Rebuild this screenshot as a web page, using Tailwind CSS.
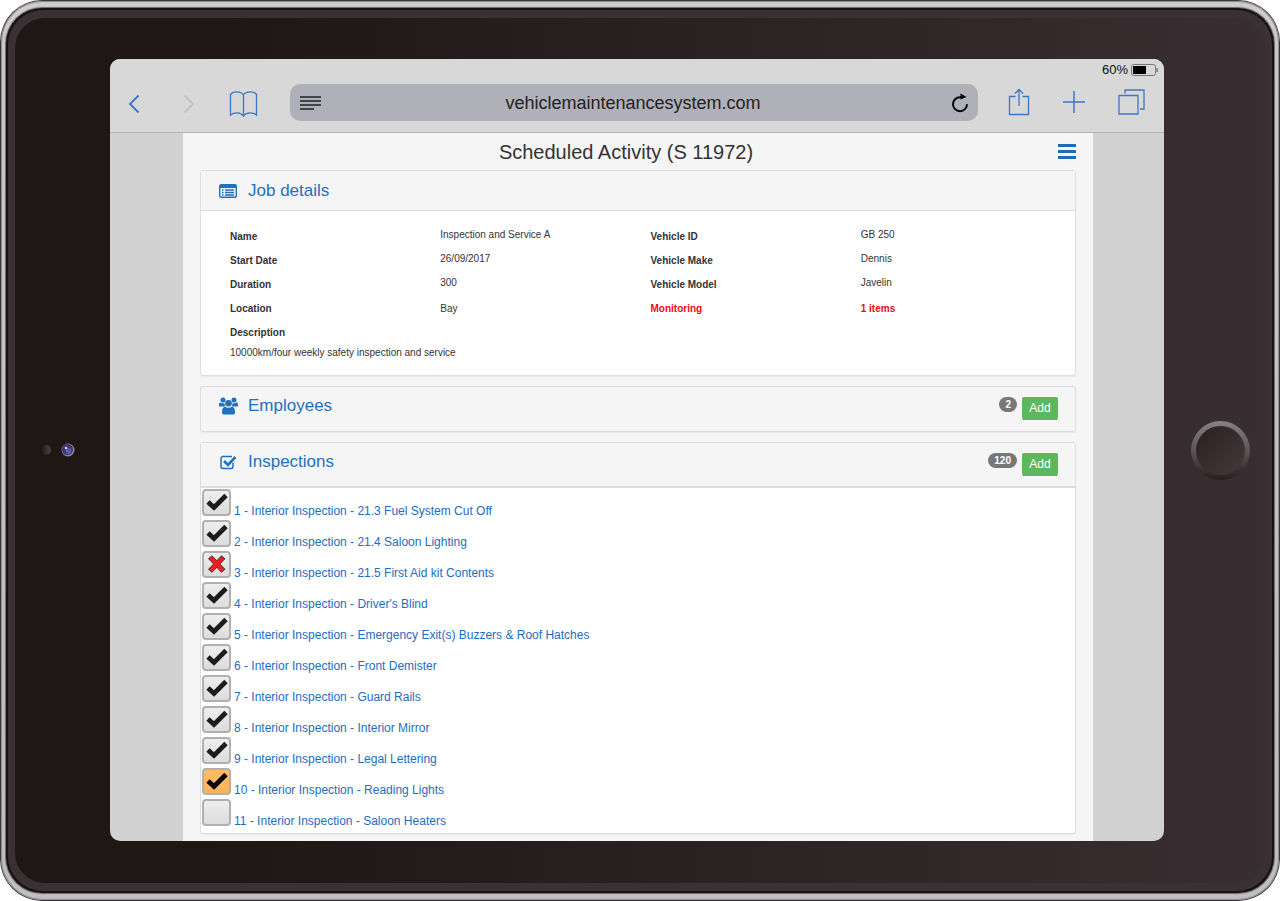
<!DOCTYPE html>
<html lang="en">
<head>
<meta charset="utf-8">
<meta name="viewport" content="width=device-width, initial-scale=1">
<title>Scheduled Activity (S 11972)</title>
<script src="https://cdn.jsdelivr.net/npm/@tailwindcss/browser@4"></script>
</head>
<body class="bg-white font-['Liberation_Sans',Arial,sans-serif] text-[#333]">

<svg class="hidden" aria-hidden="true">
  <symbol id="tick" viewBox="0 0 28 27"><path d="M5.500 13 L11.500 18.500 L23.500 6.500" fill="none" stroke="currentColor" stroke-width="4.800"/></symbol>
  <symbol id="cross" viewBox="0 0 28 27"><path d="M7.500 6 L21 20 M21 6 L7.500 20" fill="none" stroke="#333" stroke-width="5.400"/><path d="M8 6.500 L20.500 19.500 M20.500 6.500 L8 19.500" fill="none" stroke="#ee1c25" stroke-width="4"/></symbol>
</svg>

<!-- Tablet casing -->
<div class="min-h-screen flex rounded-[42px] bg-[#3a3639] p-px">
<div class="flex-1 flex rounded-[41px] bg-linear-to-b from-[#cfcdcf] to-[#c2bfc2] px-[5px] py-[7px] shadow-[inset_0_0_1px_1px_#8a888a]">
<div class="flex-1 flex rounded-[36px] bg-[#171213] p-[2px] shadow-[0_0_1px_1px_#6b676a]">
<div class="flex-1 flex rounded-[35px] bg-[#3a3135] px-[7px] py-[8px]">
<div class="flex-1 flex items-center rounded-[30px] bg-linear-to-r from-[#1e1716] from-15% to-[#392e31] pt-[41px] pb-[42px]">

  <div class="w-[95px] shrink-0 flex items-center gap-[10px] pl-[26px]" aria-hidden="true">
    <span class="size-[10px] rounded-full bg-linear-to-r from-[#1e1716] to-[#4b4547]"></span>
    <svg class="size-[14px]" viewBox="0 0 14 14"><circle cx="7" cy="7" r="6.500" fill="#8b8791"/><circle cx="6.500" cy="6.500" r="5.500" fill="#3d3670"/><circle cx="7.500" cy="8" r="3" fill="#6458a8"/><circle cx="5" cy="5" r="1.200" fill="#d5d2ee"/></svg>
  </div>

  <!-- Screen -->
  <div class="flex-1 min-w-0 self-stretch flex flex-col rounded-[10px] overflow-hidden bg-[#d2d2d2]">
    <header class="bg-[#d8d8d8] border-b border-[#b5b5b5] pb-[12px]">
      <div class="h-[25px] flex items-center justify-end gap-[3px] pr-[5px] pb-[3px] text-[13px] text-[#111]">
        <span>60%</span>
        <svg class="w-[28px] h-[12px]" viewBox="0 0 28 12" role="img" aria-label="Battery 60%"><rect x=".5" y=".5" width="24" height="11" rx="2" fill="none" stroke="#777"/><rect x="2" y="2" width="13" height="8" fill="#000"/><path d="M26 4 q1.500 2 0 4z" fill="#777" stroke="#777"/></svg>
      </div>
      <nav class="h-[36px] flex items-center pl-[18px] pr-[19px] text-[#3b76c8]">
        <button type="button" aria-label="Back" class="pt-[3px]"><svg class="w-[12px] h-[20px]" viewBox="0 0 12 20" fill="none" stroke="currentColor" stroke-width="1.800"><path d="M10.500 1.500 L2 10 L10.500 18.500"/></svg></button>
        <button type="button" aria-label="Forward" class="ml-[43px] pt-[3px] text-[#bcbcbf]"><svg class="w-[12px] h-[20px]" viewBox="0 0 12 20" fill="none" stroke="currentColor" stroke-width="1.500"><path d="M1.500 1.500 L10 10 L1.500 18.500"/></svg></button>
        <button type="button" aria-label="Bookmarks" class="ml-[34px] pt-[3px]"><svg class="w-[29px] h-[26px]" viewBox="0 0 29 26" fill="none" stroke="currentColor" stroke-width="1.300"><path d="M14.500 4 C12 0 4 0 1.500 3.500 V24 C5 21 11.500 21 14.500 25 C17.500 21 24 21 27.500 24 V3.500 C25 0 17 0 14.500 4 V25"/></svg></button>
        <div class="ml-[32px] flex-1 h-[37px] flex items-center rounded-[10px] bg-[#b0b0b9] px-[10px] pt-[2px] text-[#222]">
          <button type="button" aria-label="Reader view"><svg class="w-[22px] h-[16px]" viewBox="0 0 22 16" stroke="#222" stroke-width="1.500"><path d="M0 2h21M0 6h21M0 10h21M0 14h14"/></svg></button>
          <input type="text" aria-label="Address" value="vehiclemaintenancesystem.com" class="flex-1 min-w-0 mr-[8px] bg-transparent text-center text-[18px] leading-6 outline-none">
          <button type="button" aria-label="Reload"><svg class="w-[16px] h-[20px]" viewBox="0 0 16 20" fill="none" stroke="#000" stroke-width="2"><path d="M9 4.200 H8 A7 7 0 1 0 15 11.200"/><path d="M8.500 .5 L14.500 4 L8.500 6.500z" fill="#000" stroke="none"/></svg></button>
        </div>
        <button type="button" aria-label="Share" class="ml-[30px]"><svg class="w-[22px] h-[28px]" viewBox="0 0 22 28" fill="none" stroke="currentColor" stroke-width="1.300"><path d="M7.500 8.500H1.500v18h19v-18h-6M11 18V1.500M7 5.500l4-4 4 4"/></svg></button>
        <button type="button" aria-label="New tab" class="ml-[33px]"><svg class="size-[22px]" viewBox="0 0 22 22" stroke="currentColor" stroke-width="1.500"><path d="M11 0v22M0 11h22"/></svg></button>
        <button type="button" aria-label="Show tabs" class="ml-[33px]"><svg class="w-[27px] h-[26px]" viewBox="0 0 27 26" fill="none" stroke="currentColor" stroke-width="1.300"><path d="M1 6.500h19v18.500H1zM7 4.500V1h19v19h-4"/></svg></button>
      </nav>
    </header>

    <main class="flex-1 ml-[73px] mr-[71px] bg-[#f5f5f5] px-[17px] pb-[7px]">
      <div class="h-[37px] flex items-center">
        <h1 class="flex-1 pt-px text-center text-[20px] leading-6">Scheduled Activity (S 11972)</h1>
        <button type="button" aria-label="Menu" class="w-[24px] flex flex-col items-end gap-[3px]">
          <span class="w-[18px] h-[3px] bg-[#1d6cb9]"></span><span class="w-[18px] h-[3px] bg-[#1d6cb9]"></span><span class="w-[18px] h-[3px] bg-[#1d6cb9]"></span>
        </button>
      </div>

      <!-- Job details -->
      <section class="rounded-[3px] border border-[#ddd] bg-white shadow-[0_1px_1px_#0000000d]">
        <h2 class="h-[40px] flex items-center gap-[11px] border-b border-[#ddd] bg-[#f5f5f5] pl-[18px] text-[17px] text-[#1f70bf]">
          <svg class="w-[18px] h-[14px]" viewBox="0 0 18 14"><rect x=".7" y=".7" width="16.600" height="12.600" rx="1.500" fill="none" stroke="currentColor" stroke-width="1.400"/><path d="M1 1h16v3H1z" fill="currentColor"/><path d="M3 6h1.500M3 8.500h1.500M3 11h1.500M6 6h9M6 8.500h9M6 11h9" stroke="currentColor" stroke-width="1.400"/></svg>
          Job details
        </h2>
        <dl class="grid grid-cols-[1fr_1fr_1fr_1fr] pt-[14px] pl-[29px] pr-[4px] pb-[14px] text-[10px] *:h-[24px]">
          <dt class="font-bold leading-[24px]">Name</dt><dd class="leading-[20px]">Inspection and Service A</dd>
          <dt class="font-bold leading-[24px]">Vehicle ID</dt><dd class="leading-[20px]">GB 250</dd>
          <dt class="font-bold leading-[24px]">Start Date</dt><dd class="leading-[20px]">26/09/2017</dd>
          <dt class="font-bold leading-[24px]">Vehicle Make</dt><dd class="leading-[20px]">Dennis</dd>
          <dt class="font-bold leading-[24px]">Duration</dt><dd class="leading-[20px]">300</dd>
          <dt class="font-bold leading-[24px]">Vehicle Model</dt><dd class="leading-[20px]">Javelin</dd>
          <dt class="font-bold leading-[24px]">Location</dt><dd class="leading-[24px]">Bay</dd>
          <dt class="font-bold leading-[24px] text-[#f00a14]">Monitoring</dt><dd class="font-bold leading-[24px] text-[#f00a14]">1 items</dd>
          <dt class="col-span-4 font-bold leading-[24px]">Description</dt>
          <dd class="col-span-4 -mb-[8px] leading-[16px]">10000km/four weekly safety inspection and service</dd>
        </dl>
      </section>

      <!-- Employees -->
      <section class="mt-[10px] h-[46px] flex items-start rounded-[3px] border border-[#ddd] pt-[10px] pl-[18px] pr-[17px] shadow-[0_1px_1px_#0000000d]">
        <h2 class="flex-1 flex items-center gap-[10px] text-[17px] leading-[18px] text-[#1f70bf]">
          <svg class="w-[19px] h-[18px]" viewBox="0 0 19 18" fill="currentColor"><circle cx="4" cy="3" r="2.500"/><circle cx="15" cy="3" r="2.500"/><path d="M0 9.500V7.500C0 6 .8 5.500 1.500 5.500 3 6.500 4.500 6.500 5.500 6 5.500 8 6 9 6.500 9.500zM19 9.500V7.500C19 6 18.200 5.500 17.500 5.500 16 6.500 14.500 6.500 13.500 6 13.500 8 13 9 12.500 9.500z"/><circle cx="9.500" cy="6.200" r="3.300"/><path d="M3 15.500C3 12 4 10 6 9.800 8 11.200 11 11.200 13 9.800 15 10 16 12 16 15.500 16 17 15 17.500 14 17.500H5C4 17.500 3 17 3 15.500z"/></svg>
          Employees
        </h2>
        <span class="min-w-[17px] rounded-full bg-[#777] px-[6px] text-center text-[10px] leading-[15px] font-bold text-white">2</span>
        <button type="button" class="ml-[5px] w-[36px] rounded-[2px] bg-[#5cb85c] text-[12px] leading-[23px] text-white">Add</button>
      </section>

      <!-- Inspections -->
      <section class="mt-[10px] rounded-[3px] border border-[#ddd] bg-white shadow-[0_1px_1px_#0000000d]">
        <div class="h-[45px] flex items-start border-b-2 border-[#ddd] bg-[#f5f5f5] pt-[10px] pl-[18px] pr-[17px]">
          <h2 class="flex-1 flex items-center gap-[10px] text-[17px] leading-[18px] text-[#1f70bf]">
            <svg class="w-[19px] h-[16px]" viewBox="0 0 19 16" fill="none" stroke="currentColor"><path d="M14 9v3.500a2 2 0 0 1-2 2H4a2 2 0 0 1-2-2v-8a2 2 0 0 1 2-2h9" stroke-width="1.500"/><path d="M5 7l4 4 7.500-8" stroke-width="2.600"/></svg>
            Inspections
          </h2>
          <span class="min-w-[17px] rounded-full bg-[#777] px-[6px] text-center text-[10px] leading-[15px] font-bold text-white">120</span>
          <button type="button" class="ml-[5px] w-[36px] rounded-[2px] bg-[#5cb85c] text-[12px] leading-[23px] text-white">Add</button>
        </div>
        <ul class="pl-px pt-px pb-[3px] text-[12px] text-[#1b6ec2] *:h-[31px] *:flex *:items-start *:gap-[3px] [&_a]:pt-[15px] [&_a]:leading-[14px] [&_span]:grid [&_span>*]:col-start-1 [&_span>*]:row-start-1 [&_input]:appearance-none [&_input]:w-[29px] [&_input]:h-[27px] [&_input]:rounded-[4px] [&_input]:border-2 [&_input]:border-[#b0b0b0] [&_input]:bg-linear-to-b [&_input]:from-[#eee] [&_input]:to-[#dcdcdc] [&_svg]:w-[29px] [&_svg]:h-[27px] [&_svg]:pointer-events-none [&_svg]:text-[#1c1c1c]">
          <li><span><input type="checkbox" checked aria-labelledby="i1"><svg><use href="#tick"/></svg></span><a id="i1" href="#i1">1 - Interior Inspection - 21.3 Fuel System Cut Off</a></li>
          <li><span><input type="checkbox" checked aria-labelledby="i2"><svg><use href="#tick"/></svg></span><a id="i2" href="#i2">2 - Interior Inspection - 21.4 Saloon Lighting</a></li>
          <li><span><input type="checkbox" aria-labelledby="i3"><svg><use href="#cross"/></svg></span><a id="i3" href="#i3">3 - Interior Inspection - 21.5 First Aid kit Contents</a></li>
          <li><span><input type="checkbox" checked aria-labelledby="i4"><svg><use href="#tick"/></svg></span><a id="i4" href="#i4">4 - Interior Inspection - Driver's Blind</a></li>
          <li><span><input type="checkbox" checked aria-labelledby="i5"><svg><use href="#tick"/></svg></span><a id="i5" href="#i5">5 - Interior Inspection - Emergency Exit(s) Buzzers &amp; Roof Hatches</a></li>
          <li><span><input type="checkbox" checked aria-labelledby="i6"><svg><use href="#tick"/></svg></span><a id="i6" href="#i6">6 - Interior Inspection - Front Demister</a></li>
          <li><span><input type="checkbox" checked aria-labelledby="i7"><svg><use href="#tick"/></svg></span><a id="i7" href="#i7">7 - Interior Inspection - Guard Rails</a></li>
          <li><span><input type="checkbox" checked aria-labelledby="i8"><svg><use href="#tick"/></svg></span><a id="i8" href="#i8">8 - Interior Inspection - Interior Mirror</a></li>
          <li><span><input type="checkbox" checked aria-labelledby="i9"><svg><use href="#tick"/></svg></span><a id="i9" href="#i9">9 - Interior Inspection - Legal Lettering</a></li>
          <li><span><input type="checkbox" checked aria-labelledby="i10" class="from-[#ffbb66]! to-[#f9b35c]!"><svg class="text-black!" stroke-linejoin="miter"><use href="#tick"/></svg></span><a id="i10" href="#i10">10 - Interior Inspection - Reading Lights</a></li>
          <li><span><input type="checkbox" aria-labelledby="i11"></span><a id="i11" href="#i11">11 - Interior Inspection - Saloon Heaters</a></li>
        </ul>
      </section>
    </main>
  </div>

  <div class="w-[101px] shrink-0 pl-[27px]">
    <button type="button" aria-label="Home" class="block size-[59px] rounded-full bg-linear-to-b from-[#858185] via-[#5d5658] to-[#2a1d1e] p-[5px]">
      <span class="block size-full rounded-full bg-linear-to-br from-[#2a2021] to-[#463a3c]"></span>
    </button>
  </div>

</div></div></div></div></div>
</body>
</html>
